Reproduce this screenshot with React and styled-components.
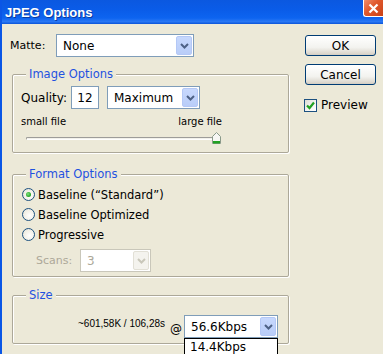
import styled, { createGlobalStyle } from "styled-components";

const GlobalStyle = createGlobalStyle`
  html, body {
    margin: 0;
    padding: 0;
    background: #ece9d8;
  }
  * {
    box-sizing: border-box;
  }
`;

const UI_FONT = `"DejaVu Sans", "Liberation Sans", sans-serif`;

function Chevron({ color = "#4d6185" }) {
  return (
    <svg width="9" height="6" viewBox="0 0 9 6">
      <path d="M1 1 L4.5 4.5 L8 1" fill="none" stroke={color} strokeWidth="2" />
    </svg>
  );
}

function Select({ value, width, disabled, children }) {
  return (
    <SelectBox $width={width} $disabled={disabled}>
      <SelectValue $disabled={disabled}>{value}</SelectValue>
      <DropButton $disabled={disabled}>
        <Chevron color={disabled ? "#c9c7ba" : "#4d6185"} />
      </DropButton>
      {children}
    </SelectBox>
  );
}

function Radio({ checked, label }) {
  return (
    <RadioRow>
      <RadioDot>{checked && <RadioInner />}</RadioDot>
      <span>{label}</span>
    </RadioRow>
  );
}

export default function App() {
  return (
    <>
      <GlobalStyle />
      <Window>
        <TitleBar>
          <Title>JPEG Options</Title>
          <CloseButton>
            <svg width="11" height="11" viewBox="0 0 11 11">
              <path d="M1.5 1.5 L9.5 9.5 M9.5 1.5 L1.5 9.5" stroke="#fff" strokeWidth="2.2" />
            </svg>
          </CloseButton>
        </TitleBar>

        <Body>
          <LeftColumn>
            <MatteRow>
              <FieldLabel $width={46}>Matte:</FieldLabel>
              <Select value="None" width={138} />
            </MatteRow>

            <Group $top={17} $height={79}>
              <Legend>Image Options</Legend>
              <QualityRow>
                <FieldLabel $width={50} $size={12}>Quality:</FieldLabel>
                <TextInput>12</TextInput>
                <Select value="Maximum" width={93} />
              </QualityRow>
              <SliderLabels>
                <span>small file</span>
                <span>large file</span>
              </SliderLabels>
              <SliderTrack>
                <Track />
                <svg width="9" height="12" viewBox="0 0 9 12">
                  <path d="M0.5 11.5 V4.5 L4.5 0.5 L8.5 4.5 V11.5 Z" fill="#f7f7f4" stroke="#8a9a8a" />
                  <rect x="1" y="9" width="7" height="2.5" fill="#21a121" />
                </svg>
              </SliderTrack>
            </Group>

            <Group $top={21} $height={103}>
              <Legend>Format Options</Legend>
              <RadioList>
                <Radio checked label={"Baseline (\u201cStandard\u201d)"} />
                <Radio label="Baseline Optimized" />
                <Radio label="Progressive" />
              </RadioList>
              <ScansRow>
                <FieldLabel $width={44} $disabled>Scans:</FieldLabel>
                <Select value="3" width={71} disabled />
              </ScansRow>
            </Group>

            <Group $top={18} $height={49}>
              <Legend>Size</Legend>
              <SizeRow>
                <SizeText>~601,58K / 106,28s</SizeText>
                <AtSign>@</AtSign>
                <Select value="56.6Kbps" width={94}>
                  <DropList>
                    <DropItem>14.4Kbps</DropItem>
                  </DropList>
                </Select>
              </SizeRow>
            </Group>
          </LeftColumn>

          <RightColumn>
            <Button>OK</Button>
            <Button>Cancel</Button>
            <CheckRow>
              <CheckBox>
                <svg width="9" height="9" viewBox="0 0 9 9">
                  <path d="M1 4.5 L3.5 7 L8 1.5" fill="none" stroke="#21a121" strokeWidth="2.2" />
                </svg>
              </CheckBox>
              <span>Preview</span>
            </CheckRow>
          </RightColumn>
        </Body>
      </Window>
    </>
  );
}

const Window = styled.div`
  width: 383px;
  height: 354px;
  overflow: hidden;
  background: #ece9d8;
  border-left: 2px solid #0a56e6;
  font-family: ${UI_FONT};
  font-size: 11px;
  color: #000;
`;

const TitleBar = styled.div`
  height: 24px;
  margin-left: -2px;
  display: flex;
  align-items: flex-start;
  justify-content: space-between;
  background: linear-gradient(
    to bottom,
    #0b58e0 0%,
    #0a5ce8 40%,
    #0d64f0 75%,
    #2a78f4 90%,
    #0a54d8 100%
  );
`;

const Title = styled.div`
  font-family: "Liberation Sans", Arial, sans-serif;
  font-weight: bold;
  font-size: 13px;
  color: #fff;
  padding: 5px 0 0 5px;
  text-shadow: 1px 1px 0 #0a3aa0;
`;

const CloseButton = styled.div`
  width: 20px;
  height: 19px;
  margin-top: -2px;
  display: flex;
  align-items: center;
  justify-content: center;
  padding-top: 2px;
  background: linear-gradient(135deg, #f09070 0%, #e0582c 45%, #c94218 100%);
  border: 1px solid #fff;
  border-right: none;
  border-radius: 3px 0 0 3px;
`;

const Body = styled.div`
  display: flex;
  padding-top: 10px;
`;

const LeftColumn = styled.div`
  width: 287px;
  padding-left: 8px;
  display: flex;
  flex-direction: column;
`;

const MatteRow = styled.div`
  display: flex;
  align-items: center;
  height: 23px;
`;

const FieldLabel = styled.div`
  width: ${(p) => p.$width}px;
  font-size: ${(p) => p.$size || 11}px;
  color: ${(p) => (p.$disabled ? "#aca899" : "#000")};
  flex-shrink: 0;
`;

const SelectBox = styled.div`
  position: relative;
  width: ${(p) => p.$width}px;
  height: 23px;
  display: flex;
  align-items: center;
  justify-content: space-between;
  background: #fff;
  border: 1px solid ${(p) => (p.$disabled ? "#c9c7ba" : "#7f9db9")};
  padding: 1px;
  flex-shrink: 0;
`;

const SelectValue = styled.div`
  padding-left: 5px;
  font-size: 12px;
  color: ${(p) => (p.$disabled ? "#aca899" : "#000")};
`;

const DropButton = styled.div`
  width: 16px;
  height: 100%;
  display: flex;
  align-items: center;
  justify-content: center;
  border-radius: 2px;
  background: ${(p) =>
    p.$disabled
      ? "#f4f3ee"
      : "linear-gradient(to bottom, #c7d8fd 0%, #b9cdf8 100%)"};
  border: 1px solid ${(p) => (p.$disabled ? "#e2e0d6" : "#b4c8f6")};
`;

const Group = styled.div`
  margin: ${(p) => p.$top}px 0 0 2px;
  height: ${(p) => p.$height}px;
  border: 1px solid #aca899;
  border-radius: 2px;
  box-shadow: 1px 1px 0 #fff, inset 1px 1px 0 #fff;
`;

const Legend = styled.div`
  width: fit-content;
  margin: -8px 0 0 13px;
  padding: 0 3px;
  height: 14px;
  line-height: 14px;
  font-size: 11.5px;
  color: #1f52e0;
  background: #ece9d8;
`;

const QualityRow = styled.div`
  display: flex;
  align-items: center;
  margin: 5px 0 0 8px;
`;

const TextInput = styled.div`
  width: 28px;
  height: 23px;
  margin-right: 8px;
  border: 1px solid #7f9db9;
  background: #fff;
  font-size: 12px;
  display: flex;
  align-items: center;
  justify-content: center;
  flex-shrink: 0;
`;

const SliderLabels = styled.div`
  width: 201px;
  margin: 7px 0 0 8px;
  display: flex;
  justify-content: space-between;
  font-size: 10px;
  line-height: 12px;
`;

const SliderTrack = styled.div`
  width: 195px;
  margin: 4px 0 0 13px;
  display: flex;
  align-items: center;
`;

const Track = styled.div`
  flex: 1;
  height: 3px;
  margin-right: -2px;
  border: 1px solid #9d9c99;
  border-bottom-color: #fff;
  border-right-color: #fff;
  border-radius: 2px;
  background: #f2f1ea;
`;

const RadioList = styled.div`
  display: flex;
  flex-direction: column;
  gap: 7px;
  margin: 7px 0 0 9px;
`;

const RadioRow = styled.div`
  display: flex;
  align-items: center;
  gap: 3px;
  font-size: 11.5px;
  height: 13px;
`;

const RadioDot = styled.div`
  width: 13px;
  height: 13px;
  border-radius: 50%;
  border: 1px solid #1c5180;
  background: radial-gradient(circle at 60% 60%, #fff 0%, #f1efe5 60%, #d8d6cb 100%);
  display: flex;
  align-items: center;
  justify-content: center;
`;

const RadioInner = styled.div`
  width: 5px;
  height: 5px;
  border-radius: 50%;
  background: radial-gradient(circle at 40% 40%, #7fe27f 0%, #21a121 70%);
`;

const ScansRow = styled.div`
  display: flex;
  align-items: center;
  margin: 8px 0 0 23px;
`;

const SizeRow = styled.div`
  display: flex;
  align-items: center;
  margin: 13px 0 0 65px;
`;

const SizeText = styled.div`
  font-family: "Liberation Sans", Arial, sans-serif;
  font-size: 10px;
  white-space: nowrap;
  margin-top: -6px;
  width: 92px;
`;

const AtSign = styled.div`
  font-size: 12px;
  width: 14px;
  margin-top: 4px;
`;

const DropList = styled.div`
  position: absolute;
  top: 22px;
  left: -1px;
  width: 94px;
  height: 40px;
  background: #fff;
  border: 1px solid #000;
  padding: 1px 0 0 5px;
  font-size: 12px;
`;

const DropItem = styled.div`
  line-height: 14px;
`;

const RightColumn = styled.div`
  display: flex;
  flex-direction: column;
  padding: 1px 0 0 16px;
  gap: 8px;
`;

const Button = styled.div`
  width: 71px;
  height: 21px;
  display: flex;
  align-items: center;
  justify-content: center;
  font-size: 12px;
  border: 1px solid #003c74;
  border-radius: 3px;
  background: linear-gradient(to bottom, #ffffff 0%, #f3f3ef 60%, #d6d0c5 100%);
  box-shadow: inset 0 -1px 0 #d6d0c5, inset 0 1px 0 #fff;
`;

const CheckRow = styled.div`
  display: flex;
  align-items: center;
  gap: 4px;
  margin-top: 5px;
  margin-left: -1px;
  font-size: 12px;
`;

const CheckBox = styled.div`
  width: 13px;
  height: 13px;
  border: 1px solid #1c5180;
  background: linear-gradient(135deg, #dcdbd4 0%, #f6f6f3 60%, #fff 100%);
  display: flex;
  align-items: center;
  justify-content: center;
`;
